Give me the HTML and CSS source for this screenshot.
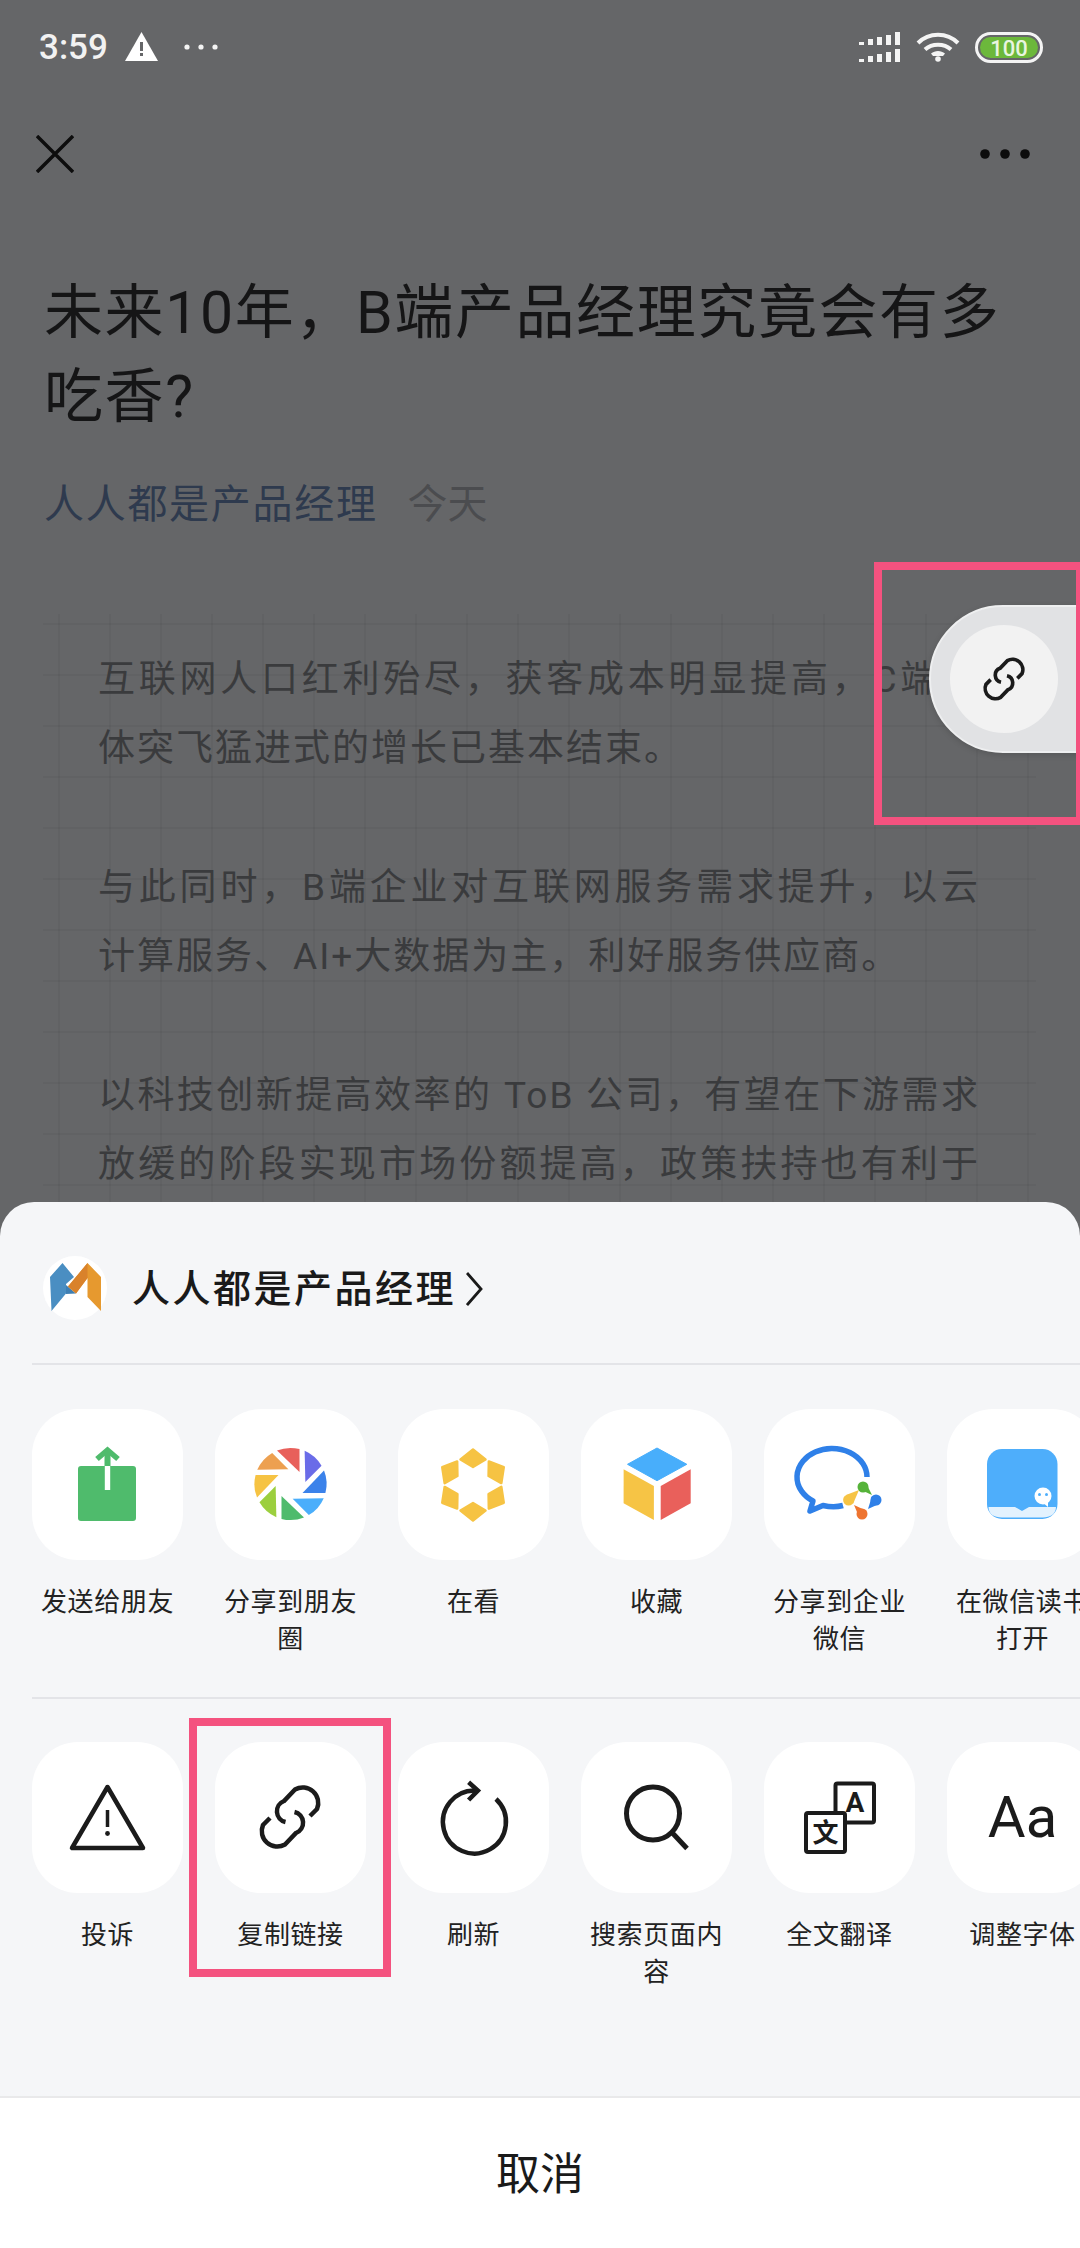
FILE: index.html
```html
<!DOCTYPE html>
<html lang="zh-CN">
<head>
<meta charset="utf-8">
<title>人人都是产品经理</title>
<link rel="stylesheet" href="styles.css">
</head>
<body>
<div class="page">
  <header class="status">
    <div class="status-left">
      <span class="time">3:59</span>
      <svg class="st-warn" viewBox="0 0 33 29"><path d="M16.5 0 33 29H0Z" fill="#fff"/><path d="M15 10h3v9h-3zM15 21h3v3h-3z" fill="#656668"/></svg>
      <svg class="st-dots" viewBox="0 0 34 6"><circle cx="3" cy="3" r="2.6"/><circle cx="17" cy="3" r="2.6"/><circle cx="31" cy="3" r="2.6"/></svg>
    </div>
    <div class="status-right">
      <svg class="st-signal" viewBox="0 0 42 30"><path d="M0 10h5v3H0zM9 7h5v6H9zM18 5h5v8h-5zM27 3h5v10h-5zM36 0h5v13h-5zM0 27h5v3H0zM9 24h5v6H9zM18 22h5v8h-5zM27 20h5v10h-5zM36 17h5v13h-5z"/></svg>
      <svg class="st-wifi" viewBox="0 0 44 30"><g fill="none" stroke="#f4f4f4" stroke-width="4"><path d="M2 11C13 0 31 0 42 11"/><path d="M9 17.500C16 11 28 11 35 17.500"/></g><path d="M15 21.500C19 18 25 18 29 21.500L27 24H17Z" fill="#f4f4f4"/><circle cx="22" cy="27" r="2.800" fill="#f4f4f4"/></svg>
      <svg class="st-batt" viewBox="0 0 68 31"><rect x="1.500" y="1.500" width="65" height="28" rx="14" fill="none" stroke="#f4f4f4" stroke-width="3"/><rect x="5" y="5" width="58" height="21" rx="10.500" fill="#6cb83b"/><text x="34" y="23.500" text-anchor="middle" class="batt-text">100</text></svg>
    </div>
  </header>

  <nav class="nav">
    <svg class="nav-close" viewBox="0 0 38 38"><path d="M1 1 37 37M37 1 1 37" fill="none" stroke="#0d0d0d" stroke-width="3.500"/></svg>
    <svg class="nav-more" viewBox="0 0 50 10"><circle cx="5" cy="5" r="4.800"/><circle cx="25" cy="5" r="4.800"/><circle cx="45" cy="5" r="4.800"/></svg>
  </nav>

  <main class="article">
    <h1 class="title">未来10年，B端产品经理究竟会有多吃香?</h1>
    <div class="meta"><span class="author">人人都是产品经理</span><span class="date">今天</span></div>
    <div class="body">
      <p class="para">互联网人口红利殆尽，获客成本明显提高，C端群体突飞猛进式的增长已基本结束。</p>
      <p class="para">与此同时，B端企业对互联网服务需求提升，以云计算服务、AI+大数据为主，利好服务供应商。</p>
      <p class="para para-cut">以科技创新提高效率的 ToB 公司，有望在下游需求放缓的阶段实现市场份额提高，政策扶持也有利于</p>
    </div>
  </main>

  <div class="pill">
    <div class="pill-circle">
      <svg class="pill-link" viewBox="38 36 74 78"><g fill="none" stroke="#1b1b1b" stroke-width="5.500"><path d="M95 74 102 67A15.500 15.500 0 0 0 80 47.500L69 59A11 11 0 0 0 70.500 80"/><path d="M55 76 48 83A15.500 15.500 0 0 0 70 102.500L81 91A11 11 0 0 0 79.500 70"/></g></svg>
    </div>
  </div>
  <div class="frame frame-pill"></div>

  <section class="sheet">
    <div class="sheet-head">
      <svg class="avatar" viewBox="0 0 64 64">
        <circle cx="32" cy="32" r="32" fill="#fff"/>
        <path d="M7 21 19.500 7 31 21 23 28V37.500L8.500 55Z" fill="#4a8ec2"/>
        <path d="M23 29 33 37.500 23 38Z" fill="#3f7fb3"/>
        <path d="M25 30.500 44.500 7 58 21V55L44.500 41V22L33 37.500Z" fill="#e6992f"/>
        <path d="M25 30.500 44.500 7V22L33 37.500Z" fill="#d9822b"/>
      </svg>
      <span class="sheet-title">人人都是产品经理</span>
      <svg class="chevron" viewBox="0 0 17 34"><path d="M1 1 15 17 1 33" fill="none" stroke="#1a1a1a" stroke-width="2.800"/></svg>
    </div>

    <div class="row row-top">
      <div class="item">
        <div class="tile"><svg class="ico" viewBox="0 0 151 151">
          <rect x="46" y="57" width="58" height="55" rx="3" fill="#4fbb6c"/>
          <path d="M65 50 75.500 41 86 50" fill="none" stroke="#4fbb6c" stroke-width="5.500"/>
          <rect x="72.500" y="44" width="6" height="13" fill="#4fbb6c"/>
          <rect x="72.800" y="57" width="5.400" height="24" fill="#fff"/>
        </svg></div>
        <div class="label">发送给朋友</div>
      </div>
      <div class="item">
        <div class="tile"><svg class="ico" viewBox="0 0 151 151"><g transform="translate(75.500 75)">
          <path d="M-13.500-33.500A36 36 0 0 1 9-34.900V-12Z" fill="#e8605b"/>
          <path transform="rotate(45)" d="M-13.500-33.500A36 36 0 0 1 9-34.900V-12Z" fill="#6a6ce8"/>
          <path transform="rotate(90)" d="M-13.500-33.500A36 36 0 0 1 9-34.900V-12Z" fill="#3b82ea"/>
          <path transform="rotate(135)" d="M-13.500-33.500A36 36 0 0 1 9-34.900V-12Z" fill="#4aaefb"/>
          <path transform="rotate(180)" d="M-13.500-33.500A36 36 0 0 1 9-34.900V-12Z" fill="#4fbb6c"/>
          <path transform="rotate(225)" d="M-13.500-33.500A36 36 0 0 1 9-34.900V-12Z" fill="#9ccf3e"/>
          <path transform="rotate(270)" d="M-13.500-33.500A36 36 0 0 1 9-34.900V-12Z" fill="#f6c343"/>
          <path transform="rotate(315)" d="M-13.500-33.500A36 36 0 0 1 9-34.900V-12Z" fill="#eda050"/>
        </g></svg></div>
        <div class="label">分享到朋友圈</div>
      </div>
      <div class="item">
        <div class="tile"><svg class="ico" viewBox="0 0 151 151"><g transform="translate(75 76)" fill="#f6c343" stroke="#f6c343" stroke-width="2.500" stroke-linejoin="round">
          <path d="M0-35.500 12.500-25.500 0-18-12.500-25.500Z"/>
          <path transform="rotate(60)" d="M0-35.500 12.500-25.500 0-18-12.500-25.500Z"/>
          <path transform="rotate(120)" d="M0-35.500 12.500-25.500 0-18-12.500-25.500Z"/>
          <path transform="rotate(180)" d="M0-35.500 12.500-25.500 0-18-12.500-25.500Z"/>
          <path transform="rotate(240)" d="M0-35.500 12.500-25.500 0-18-12.500-25.500Z"/>
          <path transform="rotate(300)" d="M0-35.500 12.500-25.500 0-18-12.500-25.500Z"/>
        </g></svg></div>
        <div class="label">在看</div>
      </div>
      <div class="item">
        <div class="tile"><svg class="ico" viewBox="0 0 151 151">
          <path d="M76 39 105.800 55.300 76 71.700 46.500 55.300Z" fill="#48aefb" stroke="#48aefb" stroke-width="1" stroke-linejoin="round"/>
          <path d="M42.600 60.300 72.900 77V111L42.600 94.300Z" fill="#f6c445"/>
          <path d="M79.700 77 109.700 60.300V94.300L79.700 111Z" fill="#e9605b"/>
        </svg></div>
        <div class="label">收藏</div>
      </div>
      <div class="item">
        <div class="tile"><svg class="ico" viewBox="0 0 151 151">
          <path d="M103 68A35 28.500 0 1 0 49 92L46 102 59 96.500Q70 99 79 96.500" fill="none" stroke="#2f80e8" stroke-width="5.500" stroke-linejoin="round"/>
          <circle cx="99" cy="78" r="5.500" fill="#56b33a"/><path d="M95 80 102 74 108 86Z" fill="#56b33a"/>
          <circle cx="84.600" cy="91" r="5.500" fill="#f6c445"/><path d="M82 86 89 95 95 81Z" fill="#f6c445"/>
          <circle cx="112" cy="91" r="5.500" fill="#2f80e8"/><path d="M108 87 115 95 104 100Z" fill="#2f80e8"/>
          <circle cx="98" cy="105" r="5.500" fill="#ee7430"/><path d="M93 103 103 102 90 96Z" fill="#ee7430"/>
        </svg></div>
        <div class="label">分享到企业微信</div>
      </div>
      <div class="item">
        <div class="tile"><svg class="ico" viewBox="0 0 151 151">
          <rect x="40" y="40" width="70.500" height="70" rx="15" fill="#4eaefb"/>
          <path d="M41.500 98H68L75 102 82 98H109V98C109 105 103 108.500 96 108.500H55C47 108.500 41.500 105 41.500 98Z" fill="#e3f2fe"/>
          <circle cx="96" cy="87" r="8.500" fill="#fff"/><path d="M95 93 101 98 101 92Z" fill="#fff"/>
          <circle cx="92.500" cy="85.500" r="1.500" fill="#4eaefb"/><circle cx="99.500" cy="85.500" r="1.500" fill="#4eaefb"/>
        </svg></div>
        <div class="label">在微信读书打开</div>
      </div>
    </div>

    <div class="row row-bottom">
      <div class="item">
        <div class="tile"><svg class="ico" viewBox="0 0 151 151">
          <path d="M75.500 45 40 106H111Z" fill="none" stroke="#1b1b1b" stroke-width="4.500" stroke-linejoin="round"/>
          <path d="M75.500 68V85" stroke="#1b1b1b" stroke-width="3.500"/><circle cx="75.500" cy="91.500" r="2.400" fill="#1b1b1b"/>
        </svg></div>
        <div class="label">投诉</div>
      </div>
      <div class="item">
        <div class="tile"><svg class="ico" viewBox="0 0 151 151"><g fill="none" stroke="#1b1b1b" stroke-width="4.500">
          <path d="M95 74 102 67A15.500 15.500 0 0 0 80 47.500L69 59A11 11 0 0 0 70.500 80"/>
          <path d="M55 76 48 83A15.500 15.500 0 0 0 70 102.500L81 91A11 11 0 0 0 79.500 70"/>
        </g></svg></div>
        <div class="label">复制链接</div>
      </div>
      <div class="item">
        <div class="tile"><svg class="ico" viewBox="0 0 151 151"><g fill="none" stroke="#1b1b1b" stroke-width="4.500">
          <path d="M98 57A31.500 31.500 0 1 1 78 48.500"/>
          <path d="M70.600 40.300 79.900 48.500 70.600 58"/>
        </g></svg></div>
        <div class="label">刷新</div>
      </div>
      <div class="item">
        <div class="tile"><svg class="ico" viewBox="0 0 151 151"><g fill="none" stroke="#1b1b1b" stroke-width="5">
          <circle cx="72" cy="71.500" r="26.500"/>
          <path d="M90.500 90 106 106.500"/>
        </g></svg></div>
        <div class="label">搜索页面内容</div>
      </div>
      <div class="item">
        <div class="tile"><svg class="ico" viewBox="0 0 151 151">
          <rect x="71.500" y="41.500" width="38.500" height="39" rx="2" fill="#fff" stroke="#1b1b1b" stroke-width="4"/>
          <text x="91" y="70" text-anchor="middle" class="ico-a">A</text>
          <rect x="42" y="71" width="39" height="39" rx="2" fill="#fff" stroke="#1b1b1b" stroke-width="4"/>
          <text x="61.500" y="100" text-anchor="middle" class="ico-wen">文</text>
        </svg></div>
        <div class="label">全文翻译</div>
      </div>
      <div class="item">
        <div class="tile"><svg class="ico" viewBox="0 0 151 151"><text x="75.500" y="95" text-anchor="middle" class="ico-aa">Aa</text></svg></div>
        <div class="label">调整字体</div>
      </div>
    </div>

    <div class="spacer"></div>
    <button class="cancel">取消</button>
  </section>

  <div class="frame frame-copy"></div>
</div>
</body>
</html>
```

FILE: styles.css
```css
* { box-sizing: border-box; }
html, body { margin: 0; padding: 0; }
body { font-family: Roboto, "Noto Sans CJK SC", sans-serif; }

.page {
  position: relative;
  width: 1080px;
  height: 2248px;
  overflow: hidden;
  background: #656668;
}

/* status bar */
.status {
  height: 94px;
  padding: 0 37px 0 39px;
  display: flex;
  align-items: center;
  justify-content: space-between;
}
.status-left, .status-right { display: flex; align-items: center; }
.time { font-size: 35px; font-weight: 500; color: #f2f2f2; width: 86px; }
.st-warn { width: 33px; height: 29px; margin-right: 26px; margin-top: -2px; }
.st-dots { width: 34px; height: 6px; fill: #f4f4f4; }
.st-signal { width: 42px; height: 30px; fill: #f4f4f4; margin-right: 15px; }
.st-wifi { width: 44px; height: 30px; margin-right: 15px; }
.st-batt { width: 68px; height: 31px; }
.batt-text { font-family: Roboto, sans-serif; font-size: 22px; font-weight: 500; fill: #e9f5e0; }

/* nav */
.nav {
  height: 120px;
  padding: 0 50px 0 36px;
  display: flex;
  align-items: center;
  justify-content: space-between;
}
.nav-close { width: 38px; height: 38px; }
.nav-more { width: 50px; height: 10px; fill: #0d0d0d; }

/* article */
.article { display: block; }
.title {
  margin: 57px 0 0 44px;
  width: 980px;
  font-size: 59px;
  font-weight: 400;
  line-height: 84px;
  color: #151516;
  letter-spacing: 1.600px;
}
.meta {
  margin: 37px 0 0 44px;
  height: 50px;
  display: flex;
  align-items: center;
  font-size: 40px;
}
.author { color: #2e3a4e; letter-spacing: 1.700px; margin-right: 30px; }
.date { color: #4b4c4f; }
.body {
  margin: 88px 0 0 43px;
  width: 993px;
  height: 640px;
  padding: 31px 0 0 55px;
  background-image:
    linear-gradient(to right, rgba(0,0,0,0.045) 2px, transparent 2px),
    linear-gradient(to bottom, rgba(0,0,0,0.045) 2px, transparent 2px);
  background-size: 51px 51px;
  background-position: 15px 9px;
}
.para {
  margin: 0 0 69.300px;
  width: 882px;
  font-size: 37px;
  line-height: 69.300px;
  letter-spacing: 2px;
  color: #3a3b3d;
  text-align: justify;
}
.para-cut { text-align-last: justify; }

/* floating pill */
.pill {
  position: absolute;
  left: 929px;
  top: 605px;
  width: 220px;
  height: 148px;
  border-radius: 74px;
  background: #e1e2e4;
  border: 2px solid #eeeff0;
  box-shadow: 0 2px 6px rgba(0,0,0,0.15);
  display: flex;
  align-items: center;
  padding-left: 19px;
}
.pill-circle {
  width: 108px;
  height: 108px;
  border-radius: 50%;
  background: #f2f2f2;
  display: flex;
  align-items: center;
  justify-content: center;
}
.pill-link { width: 50px; height: 52px; }

/* annotation frames */
.frame { position: absolute; border: 8px solid #f4527f; }
.frame-pill { left: 874px; top: 562px; width: 210px; height: 263px; }
.frame-copy { left: 189px; top: 1718px; width: 202px; height: 259px; }

/* bottom sheet */
.sheet {
  position: absolute;
  left: 0;
  right: 0;
  bottom: 0;
  height: 1046px;
  background: #f5f6f8;
  border-radius: 34px 34px 0 0;
  display: flex;
  flex-direction: column;
  overflow: hidden;
}
.sheet-head {
  height: 163px;
  margin-left: 32px;
  padding: 54px 0 0 11px;
  border-bottom: 2px solid #e3e4e8;
  display: flex;
  align-items: flex-start;
}
.avatar { width: 64px; height: 64px; flex: none; }
.sheet-title {
  margin-left: 25px;
  font-size: 38px;
  font-weight: 500;
  line-height: 66px;
  letter-spacing: 2.500px;
  color: #1a1a1a;
}
.chevron { width: 17px; height: 34px; margin: 16px 0 0 10px; }

.row {
  display: flex;
  gap: 32px;
  padding-left: 32px;
  flex: none;
}
.row-top {
  height: 334px;
  padding-top: 44px;
  border-bottom: 2px solid #e3e4e8;
  margin-left: 32px;
  padding-left: 0;
}
.row-bottom { padding-top: 43px; }
.item { width: 151px; flex: none; }
.tile {
  width: 151px;
  height: 151px;
  border-radius: 46px;
  background: #fff;
}
.ico { display: block; width: 151px; height: 151px; }
.ico-a { font-family: Roboto, sans-serif; font-weight: 700; font-size: 28px; fill: #1b1b1b; }
.ico-wen { font-family: "Noto Sans CJK SC", sans-serif; font-weight: 700; font-size: 26px; fill: #1b1b1b; }
.ico-aa { font-family: Roboto, sans-serif; font-size: 58px; fill: #1b1b1b; }
.label {
  margin-top: 24px;
  font-size: 26px;
  line-height: 36.500px;
  letter-spacing: 0.600px;
  text-align: center;
  color: #222;
}
.spacer { flex: 1; }
.cancel {
  display: block;
  width: 100%;
  height: 152px;
  padding: 0 0 5px;
  border: 0;
  border-top: 2px solid #e9e9ea;
  background: #fff;
  font-family: "Noto Sans CJK SC", sans-serif;
  font-size: 44px;
  color: #1a1a1a;
}
```
